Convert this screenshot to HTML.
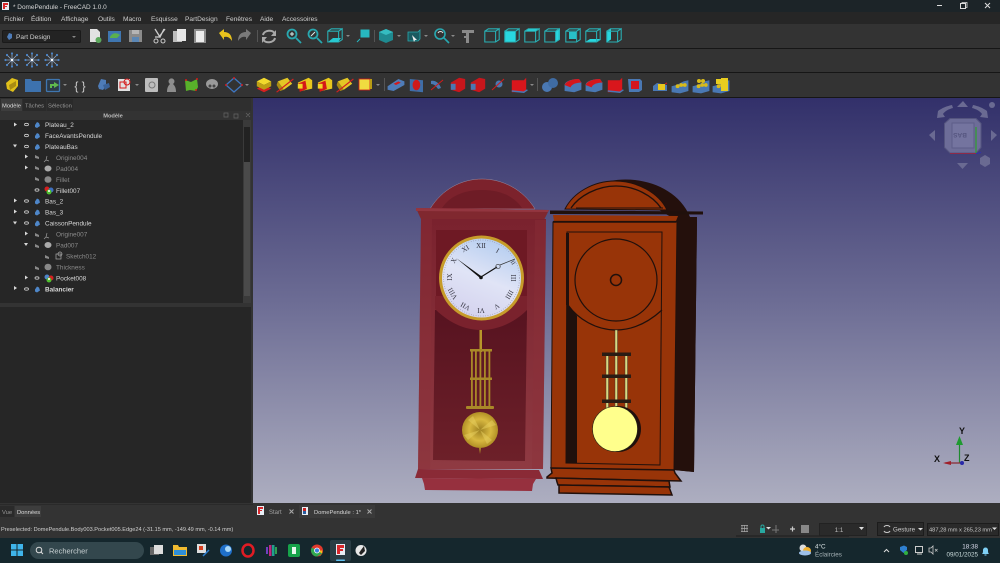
<!DOCTYPE html>
<html lang="fr"><head><meta charset="utf-8"><title>DomePendule - FreeCAD</title>
<style>
html,body{margin:0;padding:0;width:1000px;height:563px;overflow:hidden;background:#2f2f2f}
svg{display:block;font-family:"Liberation Sans",sans-serif}
.m{font-size:6.6px;fill:#cfcfcf}
.t{font-size:6.4px;fill:#d8d8d8}
.g{font-size:6.4px;fill:#8a8a8a}
.n{font-family:"Liberation Serif",serif;font-size:7px;fill:#33333f;text-anchor:middle}
</style></head><body>
<svg width="1000" height="563" viewBox="0 0 1000 563" xmlns="http://www.w3.org/2000/svg">
<defs>
<linearGradient id="bg" x1="0" y1="0" x2="0" y2="1"><stop offset="0" stop-color="#32306a"/><stop offset=".5" stop-color="#6c6c94"/><stop offset="1" stop-color="#adaec0"/></linearGradient>
<linearGradient id="face" x1="0.7" y1="0" x2="0.3" y2="1"><stop offset="0" stop-color="#b4cdf0"/><stop offset=".5" stop-color="#e0e4f6"/><stop offset="1" stop-color="#d4d2ee"/></linearGradient>
<linearGradient id="body" x1="0" y1="0" x2="0" y2="1"><stop offset="0" stop-color="#7a222e"/><stop offset="1" stop-color="#8f3a42"/></linearGradient>
<linearGradient id="pan" x1="0" y1="0" x2="0" y2="1"><stop offset="0" stop-color="#571320"/><stop offset="1" stop-color="#6d2029"/></linearGradient>
<radialGradient id="bob"><stop offset="0" stop-color="#9c7f20"/><stop offset=".6" stop-color="#d8b840"/><stop offset="1" stop-color="#b18f25"/></radialGradient>
<g id="tc" transform="scale(1.2)"><path d="M-6-4h9l3-2v9l-3 2h-9zM-6-4l3-2h9M3-4v9" fill="none" stroke="#29b0b5" stroke-width=".9"/></g>
<g id="sn" fill="none" stroke="#8fa8c8" stroke-width=".8"><path d="M-5-5L5 5M-5 5L5-5M-6 0H6M0-6V6"/><g fill="#4d86c8" stroke="none"><circle cx="-6.500" cy="0" r="1.100"/><circle cx="6.500" cy="0" r="1.100"/><circle cx="0" cy="-6.500" r="1.100"/><circle cx="0" cy="6.500" r="1.100"/><circle cx="-5" cy="-5" r="1.100"/><circle cx="5" cy="5" r="1.100"/><circle cx="-5" cy="5" r="1.100"/><circle cx="5" cy="-5" r="1.100"/></g><circle r="1.200" fill="#fff" stroke="none"/></g>
<g id="yb" transform="scale(1.2)"><path d="M-6 3l6 3 6-3-6-3z" fill="#d62020"/><path d="M-6-3l6-3 6 3-6 3z" fill="#f2d92c"/><path d="M-6-3l6 3v4l-6-3zM6-3l-6 3v4l6-3z" fill="#bd9f14"/></g>
<g id="yw" transform="scale(1.2)"><path d="M-6-3l8-3 4 5-7 5z" fill="#e3c725"/><path d="M-6-3l5 7-3 1-3-5z" fill="#a98c13"/><path d="M-7 6L7-5" stroke="#d02020"/></g>
<g id="ry" transform="scale(1.2)"><path d="M-6-2l9-4 3 2v7l-9 2z" fill="#e8c71d"/><path d="M-5-1l5-2 1 6-5 2z" fill="#d51818" stroke="#d51818"/><path d="M-6-1h4v4h-4z" fill="#f0d428"/></g>
<g id="bb" transform="scale(1.2)"><path d="M-7 1l9-6 5 2v3l-9 5-5-1z" fill="#4e7cb8"/><path d="M-2-1l4-2 2 1-4 2z" fill="#d41a1a"/></g>
<g id="br" transform="scale(1.2)"><path d="M-6-5l11 1v10l-11-1z" fill="#3f6ea8"/><ellipse cx="-.5" cy="0" rx="3.200" ry="4.400" fill="#cf1a1a"/></g>
<g id="rs" transform="scale(1.2)"><path d="M-6 4V-2l7-4 5 1v8l-5 3z" fill="#c8161c"/><path d="M-6-1h4v5h-4z" fill="#4a78b3"/></g>
<g id="rb" transform="scale(1.2)"><path d="M-6-4h10l2-2v10l-2 2h-10z" fill="#d9161c"/><path d="M-6 5l10 1 3-2" fill="none" stroke="#4a78b3" stroke-width="1.200"/></g>
<g id="rc" transform="scale(1.2)"><path d="M-7 5V0c0-3 6-5 12-5l2 3v6l-6 2z" fill="#4a78b3"/><path d="M-7 0c1-3 6-5 12-5l2 3c-4 0-8 1-9 4z" fill="#d4161c"/></g>
<g id="yg" transform="scale(1.2)"><path d="M-7 6V1l4-1 6-3 4-1v9l-7 2z" fill="#4a78b3"/><circle cx="-2" cy="1" r="1.600" fill="#d9bb1a"/><circle cx="1" cy="0" r="1.600" fill="#d9bb1a"/><circle cx="4" cy="0" r="1.600" fill="#d9bb1a"/></g>
<path id="dd" d="M0 0h4l-2 2z" fill="#8a8a8a"/>
</defs>

<!-- chrome -->
<rect width="1000" height="563" fill="#2f2f2f"/>
<rect width="1000" height="12" fill="#1c2428"/>
<rect y="12" width="1000" height="12" fill="#262626"/>
<rect y="24" width="1000" height="74" fill="#333"/>
<rect y="48" width="1000" height="1" fill="#161616"/>
<rect y="72" width="1000" height="1" fill="#161616"/>
<rect y="97" width="1000" height="1" fill="#161616"/>

<!-- title -->
<rect x="2" y="2" width="7" height="8" fill="#e8eef5"/><path d="M3 3h5v2H5v1h2v1H5v2H3z" fill="#d8282c"/>
<text x="13" y="9" style="font-size:6.450px" fill="#d6d6d6">* DomePendule - FreeCAD 1.0.0</text>
<path d="M937 5.500h5" stroke="#ddd"/><rect x="960.500" y="3.500" width="5" height="5" fill="none" stroke="#ddd"/><path d="M962 3.500v-1h5v5h-1" fill="none" stroke="#ddd" stroke-width=".8"/><path d="M985 3l5 5M990 3l-5 5" stroke="#ddd"/>

<!-- menu -->
<g class="m"><text x="4" y="21" class="m">Fichier</text><text x="31" y="21" class="m">Édition</text><text x="61" y="21" class="m">Affichage</text><text x="98" y="21" class="m">Outils</text><text x="123" y="21" class="m">Macro</text><text x="151" y="21" class="m">Esquisse</text><text x="185" y="21" class="m">PartDesign</text><text x="226" y="21" class="m">Fenêtres</text><text x="260" y="21" class="m">Aide</text><text x="282" y="21" class="m">Accessoires</text></g>

<!-- toolbar 1 -->
<rect x="2.500" y="30.500" width="78" height="12" rx="1" fill="#232323" stroke="#1a1a1a"/>
<path d="M7 37l2-4 3 1v4l-3 2z" fill="#4e7cb8"/><text x="16" y="39" class="m">Part Design</text><path d="M72 36h4l-2 2z" fill="#888"/>
<path d="M90 29h7l3 3v10H90z" fill="#e2e2e2"/><circle cx="98.500" cy="40" r="3" fill="#5ca85c"/>
<path d="M108 31h13v11h-13z" fill="#3f76b0"/><path d="M110 37c2-4 6-5 10-2l-3 3h-7z" fill="#5bb04d"/>
<path d="M129 30h13v12h-13z" fill="#8b8b8b"/><rect x="132" y="37" width="7" height="5" fill="#5b87b5"/><rect x="132" y="30" width="7" height="4" fill="#b5b5b5"/>
<path d="M155 29l5 8 4-8M165 29l-6 8-4 0" fill="none" stroke="#ccc" stroke-width="1.300"/><circle cx="156" cy="41" r="2" fill="none" stroke="#ccc"/><circle cx="163" cy="41" r="2" fill="none" stroke="#ccc"/>
<rect x="173" y="31" width="9" height="11" fill="#bdbdbd"/><rect x="177" y="29" width="9" height="12" fill="#e6e6e6"/>
<rect x="194" y="29" width="12" height="14" fill="#8d8d8d"/><rect x="196" y="31" width="8" height="11" fill="#ececec"/>
<path d="M219 33l5-4v3c5 0 8 3 8 9-2-3-4-5-8-4v3z" fill="#e8c21c"/>
<path d="M251 33l-5-4v3c-5 0-8 3-8 9 2-3 4-5 8-4v3z" fill="#7a7a7a"/>
<rect x="257" y="30" width="1" height="12" fill="#555"/>
<path d="M263 35c1-5 10-6 12-1M275 38c-1 5-10 6-12 1" fill="none" stroke="#a8a8a8" stroke-width="2"/><path d="M276 30v6h-5zM262 43v-6h5z" fill="#a8a8a8"/>
<g fill="none" stroke="#28a8b0" stroke-width="1.800"><circle cx="292" cy="34" r="4.500"/><path d="M296 38l5 5"/><circle cx="313" cy="34" r="4.500"/><path d="M317 38l5 5"/></g>
<path d="M290 34h4M292 32v4" stroke="#d8f0f0"/><path d="M311 36l4-4" stroke="#d8f0f0"/>
<g transform="translate(335 36)"><use href="#tc"/><path d="M-7 6l5-4h8l-3 4z" fill="#28c8d0"/></g><use href="#dd" x="346" y="35"/>
<path d="M361 30h8v7h-8zM357 42l3-3" fill="#27b8c0" stroke="#27b8c0"/>
<rect x="374" y="30" width="1" height="12" fill="#555"/>
<path d="M379 32l7-3 7 3v8l-7 3-7-3z" fill="#1f8a90"/><path d="M379 32l7 3 7-3-7-3z" fill="#35bcc0"/><use href="#dd" x="397" y="35"/>
<g transform="translate(414 36)"><path d="M-6-4h10l2-2v9l-2 2h-10z" fill="#1a5a60" stroke="#29a8ad" stroke-width=".8"/><path d="M-2-1l5 5-2 0 -1 2z" fill="#eee"/></g><use href="#dd" x="424" y="35"/>
<circle cx="440" cy="34" r="5" fill="none" stroke="#28a8b0" stroke-width="1.600"/><path d="M444 38l5 5" stroke="#28a8b0" stroke-width="1.600"/><path d="M438 33c1-2 4-2 5 0" stroke="#ddd" fill="none"/><use href="#dd" x="451" y="35"/>
<path d="M462 30h12v3h-5v10h-3v-5h-2v-2h2v-3h-4z" fill="#8a8a8a"/>
<use href="#tc" x="492" y="36"/>
<rect x="485" y="0" width="0" height="0"/>
<rect x="505" y="31" width="10" height="11" fill="#28d8e0"/><use href="#tc" x="512" y="36"/>
<path d="M525 31l4-2.500h11l-4 2.500z" fill="#28d8e0"/><use href="#tc" x="532" y="36"/>
<path d="M556 31l4-2.500v11l-4 2.500z" fill="#28d8e0"/><use href="#tc" x="552" y="36"/>
<rect x="569" y="32" width="7" height="7" fill="#28c0c8"/><use href="#tc" x="573" y="36"/>
<path d="M586 41.500l4-2.500h11l-4 2.500z" fill="#28d8e0"/><use href="#tc" x="593" y="36"/>
<path d="M607 31l4-2.500v11l-4 2.500z" fill="#28d8e0"/><use href="#tc" x="614" y="36"/>

<!-- toolbar 2 -->
<use href="#sn" x="12" y="60"/><use href="#sn" x="32" y="60"/><use href="#sn" x="52" y="60"/>

<!-- toolbar 3 -->
<path d="M6 83l6-5 6 2v6l-5 6-6-3z" fill="#e0c01a"/><path d="M9 85l7-4v5l-6 4z" fill="#a98c13"/>
<path d="M25 79h6l1 2h9v11H25z" fill="#3d72ae"/>
<rect x="46.500" y="79.500" width="13" height="12" rx="1" fill="#2c3a48" stroke="#3f76b0" stroke-width="1.300"/><path d="M50 88v-4h4v-2l5 3-5 3v-2h-2v2z" fill="#5fb84d"/><use href="#dd" x="63" y="84"/>
<text x="80" y="90" text-anchor="middle" style="font-size:12px" fill="#ccc">{ }</text>
<path d="M98 86l3-7 5 1v6l-3 4-4-1z" fill="#4e7cb8"/><path d="M103 85l6-2 1 4-5 3z" fill="#3a6298"/>
<rect x="118" y="79" width="12" height="12" fill="#e2e2e2"/><rect x="120" y="82" width="6" height="6" fill="none" stroke="#d41a1a"/><circle cx="127" cy="82" r="3" fill="none" stroke="#d41a1a"/><use href="#dd" x="135" y="84"/>
<rect x="145" y="78" width="13" height="14" rx="1" fill="#bdbdbd"/><circle cx="152" cy="85" r="3" fill="none" stroke="#777"/>
<path d="M167 92c0-4 1-6 3-8a3 3 0 1 1 3 0c2 2 3 4 3 8z" fill="#8d8d8d"/>
<path d="M185 80l6 2 6-3 1 8-2 4-6-1-4 1z" fill="#58b02a"/><circle cx="186" cy="80" r="1" fill="#d41a1a"/><circle cx="197" cy="79" r="1" fill="#d41a1a"/><circle cx="196" cy="90" r="1" fill="#d41a1a"/>
<ellipse cx="212" cy="84" rx="6" ry="5" fill="#9a9a9a"/><circle cx="210" cy="86" r="1.500" fill="#444"/><circle cx="214" cy="86" r="1.500" fill="#444"/>
<path d="M226 85l8-7 8 7-8 7z" fill="none" stroke="#3f76c0" stroke-width="1.300"/><g fill="#d41a1a"><circle cx="234" cy="78" r="1"/><circle cx="242" cy="85" r="1"/><circle cx="226" cy="85" r="1"/></g><use href="#dd" x="245" y="84"/>
<use href="#yb" x="264" y="85"/><use href="#yw" x="285" y="85"/><use href="#ry" x="305" y="85"/><use href="#ry" x="325" y="85"/><use href="#yw" x="345" y="85"/>
<rect x="359" y="79" width="11" height="11" fill="#f0dc40" stroke="#d41a1a" stroke-width=".8"/><rect x="370" y="79" width="2" height="10" fill="#b89c14"/><use href="#dd" x="376" y="84"/>
<rect x="384" y="78" width="1" height="13" fill="#555"/>
<use href="#bb" x="396" y="85"/><use href="#br" x="417" y="85"/><path d="M431 81c3-1 8 1 10 7l-3 1c-2-3-4-5-7-5z" fill="#4a78b3"/><path d="M431 90l12-10" stroke="#d41a1a"/>
<use href="#rs" x="458" y="85"/><use href="#rs" x="478" y="85"/><circle cx="499" cy="84" r="3.500" fill="#4a78b3"/><path d="M492 90l12-11" stroke="#d41a1a"/><use href="#rb" x="519" y="85"/><use href="#dd" x="530" y="84"/>
<rect x="537" y="78" width="1" height="13" fill="#555"/>
<circle cx="547" cy="87" r="5" fill="#4a78b3"/><circle cx="553" cy="83" r="5" fill="#3f6ca4"/>
<use href="#rc" x="573" y="85"/><use href="#rc" x="594" y="85"/><use href="#rb" x="615" y="85"/><g transform="translate(635 85)"><path d="M-7-6h12l2 2v9l-3 2h-10z" fill="#4a78b3"/><path d="M-4-4h8v8h-8z" fill="#d4161c"/></g>
<g transform="translate(660 85)"><path d="M-7 6V1l4-3 10 2v6z" fill="#4a78b3"/><rect x="-2" y="-1" width="7" height="6" fill="#e8c71d"/><path d="M5-1l2-1" stroke="#d41a1a"/></g>
<use href="#yg" x="680" y="85"/><use href="#yg" x="701" y="85"/><circle cx="699" cy="81" r="2" fill="#d9bb1a"/><circle cx="703" cy="81" r="2" fill="#d9bb1a"/>
<use href="#yg" x="721" y="85"/><rect x="716" y="79" width="6" height="5" fill="#e8cd20"/><rect x="721" y="78" width="7" height="8" fill="#e8cd20"/><rect x="721" y="85" width="7" height="6" fill="#e8cd20"/>

<!-- left panel -->
<rect y="98" width="253" height="405" fill="#2f2f2f"/>
<rect x="1" y="99" width="21" height="12" fill="#3d3d3d"/><rect x="23" y="99" width="23" height="12" fill="#2a2a2a"/><rect x="47" y="99" width="26" height="12" fill="#2a2a2a"/>
<text x="2" y="107.500" style="font-size:5.800px" fill="#ddd">Modèle</text><text x="25" y="107.500" style="font-size:5.800px" fill="#999">Tâches</text><text x="48" y="107.500" style="font-size:5.800px" fill="#999">Sélection</text>
<rect y="111" width="253" height="9" fill="#333"/>
<text x="113" y="117.500" text-anchor="middle" style="font-size:5.700px;font-weight:bold" fill="#bbb">Modèle</text>
<path d="M224 113h4v4h-4zM234 114h4v4h-4zM246 113l4 4M250 113l-4 4" fill="none" stroke="#666" stroke-width=".7"/>
<rect y="120" width="243" height="183" fill="#262626"/>
<rect x="243" y="120" width="8" height="183" fill="#3a3a3a"/><rect x="244" y="127" width="6" height="35" fill="#222"/><rect x="244" y="162" width="6" height="134" fill="#4a4a4a"/>
<rect y="303" width="253" height="4" fill="#333"/>
<rect y="307" width="253" height="197" fill="#262626"/>
<rect x="251" y="98" width="2" height="405" fill="#333"/>

<!-- tree rows -->
<g fill="#d8d8d8"><path d="M14 122.500l3 2-3 2zM14 198.500l3 2-3 2zM14 209.500l3 2-3 2zM14 286l3 2-3 2zM25 154.500l3 2-3 2zM25 165.500l3 2-3 2zM25 231.500l3 2-3 2zM25 275.500l3 2-3 2z"/><path d="M13 144.500l4 0-2 3zM13 221.500l4 0-2 3zM24 243l4 0-2 3z"/></g>
<g fill="none" stroke="#cfcfcf" stroke-width=".8"><ellipse cx="26.500" cy="124.500" rx="2" ry="1.200"/><ellipse cx="26.500" cy="135.500" rx="2" ry="1.200"/><ellipse cx="26.500" cy="146.500" rx="2" ry="1.200"/><ellipse cx="26.500" cy="201" rx="2" ry="1.200"/><ellipse cx="26.500" cy="212" rx="2" ry="1.200"/><ellipse cx="26.500" cy="223" rx="2" ry="1.200"/><ellipse cx="26.500" cy="289" rx="2" ry="1.200"/><ellipse cx="37" cy="190" rx="2" ry="1.200"/><ellipse cx="37" cy="278" rx="2" ry="1.200"/></g>
<g fill="#8a8a8a"><path d="M35 155l4 2 0 2-4-1zM35 166l4 2 0 2-4-1zM35 177l4 2 0 2-4-1zM35 233l4 2 0 2-4-1zM35 244l4 2 0 2-4-1zM35 266l4 2 0 2-4-1zM45 255l4 2 0 2-4-1z"/></g>
<g fill="#4e86c8"><path d="M35 125l2-3 2 1 1 3-3 2-2-1z"/><path d="M35 136l2-3 2 1 1 3-3 2-2-1z"/><path d="M35 147l2-3 2 1 1 3-3 2-2-1z"/><path d="M35 201.500l2-3 2 1 1 3-3 2-2-1z"/><path d="M35 212.500l2-3 2 1 1 3-3 2-2-1z"/><path d="M35 223.500l2-3 2 1 1 3-3 2-2-1z"/><path d="M35 289.500l2-3 2 1 1 3-3 2-2-1z"/></g>
<path d="M47 156l-1 4M46 160l-2 2M46 160l3 1M47 233l-1 4M46 237l-2 2M46 237l3 1" stroke="#999" stroke-width=".7"/>
<ellipse cx="48" cy="168.500" rx="3.500" ry="3" fill="#aaa"/><ellipse cx="48" cy="179.500" rx="3.500" ry="3.300" fill="#888"/><ellipse cx="48" cy="245" rx="3.500" ry="3" fill="#aaa"/><ellipse cx="48" cy="267" rx="3.500" ry="3.300" fill="#888"/>
<rect x="56" y="254" width="5" height="5" fill="none" stroke="#aaa" stroke-width=".7"/><circle cx="60" cy="254" r="2" fill="none" stroke="#aaa" stroke-width=".7"/>
<circle cx="47" cy="189" r="2.500" fill="#d42020"/><circle cx="51" cy="190" r="2.500" fill="#3f6fc0"/><circle cx="49" cy="192" r="2.500" fill="#50c030"/><circle cx="49" cy="191" r="1" fill="#fff"/>
<circle cx="47" cy="277" r="2.500" fill="#4e86c8"/><circle cx="51" cy="278" r="2.500" fill="#d42020"/><circle cx="49" cy="280" r="2.500" fill="#50c030"/><circle cx="49" cy="279" r="1" fill="#fff"/>
<g class="t"><text x="45" y="127" class="t">Plateau_2</text><text x="45" y="138" class="t">FaceAvantsPendule</text><text x="45" y="149" class="t">PlateauBas</text><text x="56" y="160" class="g">Origine004</text><text x="56" y="171" class="g">Pad004</text><text x="56" y="182" class="g">Fillet</text><text x="56" y="193" class="t">Fillet007</text><text x="45" y="203.500" class="t">Bas_2</text><text x="45" y="214.500" class="t">Bas_3</text><text x="45" y="225.500" class="t">CaissonPendule</text><text x="56" y="236.500" class="g">Origine007</text><text x="56" y="247.500" class="g">Pad007</text><text x="66" y="258.500" class="g">Sketch012</text><text x="56" y="269.500" class="g">Thickness</text><text x="56" y="280.500" class="t">Pocket008</text><text x="45" y="291.500" class="t" style="font-weight:bold" fill="#fff">Balancier</text></g>

<!-- viewport -->
<rect x="253" y="98" width="747" height="405" fill="url(#bg)"/>

<!-- nav cube -->
<g fill="#6a6a92">
<path d="M937 118l1-7c4-3 9-5 14-6l1 3c-4 1-8 3-10 6l2 3zM988 118l-1-7c-4-3-9-5-14-6l-1 3c4 1 8 3 10 6l-2 3zM963 101l5 6h-11zM929 135l6-5v11zM997 135l-6-5v11zM957 163h11l-5.500 6z"/>
<circle cx="992" cy="105" r="3"/>
<path d="M980 158l5-3 5 3v6l-5 3-5-3z"/>
</g>
<path d="M950 118.500h26l5 5v24l-5 5.500h-26l-5.500-5.500v-24z" fill="#6d6d98" stroke="#55557f"/><path d="M952 123h22v25h-22z" fill="#74749f" stroke="#5d5d88"/>
<text x="960" y="139" text-anchor="middle" transform="rotate(180 960 136)" style="font-size:6.500px;font-weight:bold" fill="#55557f">BAS</text>
<path d="M976 127v26" stroke="#2ea02e" stroke-width="1.200"/><path d="M950 153.500h26" stroke="#8e2a48"/><path d="M976 153.500l5-1" stroke="#3030b0"/>

<!-- LEFT CLOCK -->
<path d="M430 209c12-20 32-30 52-30s41 10 53 30z" fill="#7c222c" stroke="#9a8a9e" stroke-width=".5"/>
<path d="M442 208c8-12 22-18 40-18s32 6 40 18z" fill="#6e1c26"/>
<path d="M421 219l-1-2-4-9 133 2-4 8-1 2z" fill="#80282f"/>
<path d="M416 208l133 2-1 2-132-1z" fill="#933640"/>
<path d="M421 219h125l-3 250-125-0z" fill="url(#body)"/>
<path d="M421 219h11l-2 250h-12zM535 220h11l-3 249h-11z" fill="#8b3038" opacity=".35"/>
<rect x="436" y="230" width="91" height="90" fill="#6e1924"/>
<path d="M435 310h92l-2 151-92-1z" fill="url(#pan)"/>
<path d="M435 309c8 8 24 21 46 21s38-12 46-20v-14h-92z" fill="#7a222d"/>
<circle cx="481.500" cy="278" r="42.500" fill="#c79c2a"/>
<circle cx="481.500" cy="278" r="39.500" fill="url(#face)"/>
<circle cx="481.500" cy="278" r="38" fill="none" stroke="#9a9ab0" stroke-width="1" stroke-dasharray=".6 1.800"/>
<g>
<text class="n" x="481" y="248" >XII</text>
<text class="n" transform="rotate(30 498 250)" x="498" y="253">I</text>
<text class="n" transform="rotate(60 514 262)" x="514" y="265" style="font-size:6px">II</text>
<text class="n" transform="rotate(90 514 278)" x="514" y="281">III</text>
<text class="n" transform="rotate(120 510 295)" x="510" y="298">IIII</text>
<text class="n" transform="rotate(150 497 307)" x="497" y="310">V</text>
<text class="n" transform="rotate(180 481 311)" x="481" y="314">VI</text>
<text class="n" transform="rotate(210 465 307)" x="465" y="310">VII</text>
<text class="n" transform="rotate(240 452 294)" x="452" y="297">VIII</text>
<text class="n" transform="rotate(270 449 277)" x="449" y="280">IX</text>
<text class="n" transform="rotate(300 453 260)" x="453" y="263">X</text>
<text class="n" transform="rotate(330 465 248)" x="465" y="251">XI</text>
</g>
<path d="M456 258l25 18 1.500 2-3-.500z" fill="#111"/>
<path d="M481 277l16-10" stroke="#111" stroke-width="1.200"/><circle cx="498" cy="266.500" r="2.200" fill="none" stroke="#333" stroke-width=".7"/><path d="M500 265l15-6" stroke="#333" stroke-width=".7"/>
<circle cx="481" cy="277.500" r="1.800" fill="#111"/>
<!-- left pendulum -->
<rect x="479.500" y="330" width="2.500" height="22" fill="#b8962a"/>
<g fill="#a98828">
<rect x="470" y="349" width="22" height="2.500"/><rect x="470" y="377.500" width="22" height="2.500"/><rect x="466" y="406" width="28" height="3" rx="1"/>
<rect x="471" y="350" width="1.800" height="58"/><rect x="475" y="350" width="1.800" height="58"/><rect x="479.500" y="350" width="1.800" height="58"/><rect x="484" y="350" width="1.800" height="58"/><rect x="488.500" y="350" width="1.800" height="58"/>
</g>
<circle cx="480" cy="430" r="18" fill="url(#bob)"/>
<path d="M480 430l-12-10 5-4zM480 430l12 10-5 4zM480 430l-12 10-4-5zM480 430l12-10 4 5z" fill="#e8d060" opacity=".5"/>
<path d="M479 448h2l-1 6z" fill="#a98828"/>
<!-- left base -->
<path d="M418 469l121 1 4 9-128-1z" fill="#8a2a36"/>
<path d="M422 478l114 1-3 5-1 7-107-1-1-6z" fill="#96303e"/>

<!-- RIGHT CLOCK -->
<path d="M610 181c30-6 68 6 80 36l7 3-3 252-20-2 2-250z" fill="#24100c"/>
<path d="M677 217h20l-3 255-20-2z" fill="#24100c"/>
<path d="M565 209c8-16 28-28 50-28s44 12 52 29z" fill="#983408" stroke="#20100c" stroke-width="1"/>
<path d="M571 208c8-12 26-22 45-22s37 10 45 22" fill="none" stroke="#20100c" stroke-width="1.300"/>
<path d="M576 208h87" stroke="#20100c"/>
<path d="M553 222h124l-3 248-123-2z" fill="#983408" stroke="#20100c"/>
<path d="M550 210.500l153 1v3l-153-.5z" fill="#20100c"/>
<path d="M553 215l125 1-2 5h-122z" fill="#983408"/><path d="M553 221.800h123" stroke="#20100c" stroke-width="1.800"/>
<path d="M567 232h95l-2 233-94-2z" fill="#983408" stroke="#20100c"/>
<path d="M566 233h3v72h-3z" fill="#20100c"/>
<path d="M567 303l10 13v147h-11z" fill="#20100c"/>
<path d="M568 305c10 14 28 25 48 25s35-10 46-20" fill="none" stroke="#20100c" stroke-width="1.200"/>
<circle cx="616" cy="280" r="41" fill="none" stroke="#20100c" stroke-width="1.200"/>
<circle cx="616" cy="280" r="5.500" fill="none" stroke="#20100c" stroke-width="1.500"/>
<!-- right pendulum -->
<rect x="615" y="330" width="2.500" height="78" fill="#d8d880" stroke="#333" stroke-width=".4"/>
<rect x="606" y="354" width="2.500" height="54" fill="#d8d880" stroke="#333" stroke-width=".4"/><rect x="625" y="354" width="2.500" height="54" fill="#d8d880" stroke="#333" stroke-width=".4"/>
<rect x="602" y="352.500" width="29" height="3.500" fill="#2a1c14"/><rect x="602" y="374.500" width="29" height="3.500" fill="#2a1c14"/><rect x="602" y="399.500" width="29" height="3.500" fill="#2a1c14"/>
<circle cx="618" cy="429" r="23" fill="#20100c"/>
<circle cx="615" cy="429" r="22.500" fill="#ffff8c" stroke="#2a2a18" stroke-width=".6"/>
<!-- right base -->
<path d="M551 468l123 2 1 3 6 8-134-3v-1l5-4z" fill="#983408" stroke="#20100c" stroke-width="1.500"/>
<path d="M556 478l113 3 1 6-112-2-1-3z" fill="#983408" stroke="#20100c" stroke-width="1.500"/>
<path d="M559 485l110 2 3 8-113-2z" fill="#983408" stroke="#20100c" stroke-width="1.500"/>

<!-- axis -->
<path d="M959.500 463v-22" stroke="#1f8a2f" stroke-width="1.200"/><path d="M956 445l3.500-9 3.500 9z" fill="#1f9a30"/>
<path d="M962 463h-17" stroke="#8a2a34" stroke-width="1.200"/><path d="M951 461l-8 2 8 2z" fill="#a01f2a"/>
<circle cx="962" cy="463" r="2" fill="#2828a8"/>
<g style="font-size:9px;font-weight:bold" fill="#111"><text x="959" y="434">Y</text><text x="934" y="462">X</text><text x="964" y="461">Z</text></g>

<!-- tab bar / status -->
<rect y="503" width="1000" height="35" fill="#333"/>
<rect x="0" y="504" width="253" height="1" fill="#2a2a2a"/>
<rect x="0" y="506" width="14" height="11" fill="#2a2a2a"/><rect x="15" y="506" width="26" height="11" fill="#3d3d3d"/>
<text x="2" y="514" style="font-size:5.800px" fill="#999">Vue</text><text x="17" y="514" style="font-size:5.800px" fill="#ddd">Données</text>
<rect x="299" y="505" width="76" height="13" fill="#3a3a3a"/>
<rect x="257" y="506" width="7" height="9" fill="#e8eef5"/><path d="M258 507h5v2h-3v1h2v1h-2v3h-2z" fill="#d8282c"/>
<text x="269" y="514" style="font-size:6px" fill="#a0a0a0">Start</text><path d="M289.500 509.500l4 4M293.500 509.500l-4 4" stroke="#aaa"/>
<rect x="302" y="507" width="6" height="8" fill="#e8eef5"/><rect x="303" y="508" width="3" height="3" fill="#c82020"/><rect x="303" y="511" width="3" height="3" fill="#2a5fa0"/>
<text x="314" y="514" style="font-size:5.800px" fill="#d6d6d6">DomePendule : 1*</text><path d="M367.500 509.500l4 4M371.500 509.500l-4 4" stroke="#aaa"/>
<text x="1" y="531" style="font-size:5.600px" fill="#cfcfcf">Preselected: DomePendule.Body003.Pocket005.Edge24 (-31.15 mm, -149.49 mm, -0.14 mm)</text>
<path d="M741 525.500h7M741 528.500h7M741 531.500h7M742 525v7M744.500 525v7M747 525v7" stroke="#aaa" stroke-width=".7"/>
<rect x="760" y="528" width="5" height="5" fill="#28a8a0"/><path d="M761 528v-1.500a1.500 1.500 0 0 1 3 0V528" fill="none" stroke="#28a8a0"/><path d="M766 527h5l-2.500 2.500z" fill="#ddd"/>
<path d="M776 525v8M772 530h7" stroke="#777"/><path d="M790 529h5M792.500 526.500v5" stroke="#ccc" stroke-width="1.200"/><rect x="801" y="525" width="8" height="8" fill="#888"/>
<path d="M736 536h113" stroke="#1c1c1c"/>
<rect x="819.500" y="523.500" width="47" height="12" fill="#2a2a2a" stroke="#222"/><text x="839" y="532" text-anchor="middle" style="font-size:6.200px" fill="#bbb">1:1</text><path d="M859 527h5l-2.500 3z" fill="#ddd"/>
<rect x="877.500" y="522.500" width="46" height="13" fill="#2a2a2a" stroke="#1c1c1c"/><path d="M884 527c1-2 5-2 6 0M890 531c-1 2-5 2-6 0" fill="none" stroke="#ccc"/><text x="893" y="531.500" style="font-size:6.200px" fill="#ccc">Gesture</text><path d="M918 528h5l-2.500 2.500z" fill="#ddd"/>
<rect x="927.500" y="523.500" width="71" height="12" fill="#2a2a2a" stroke="#1c1c1c"/><text x="929" y="531.500" style="font-size:5.700px" fill="#c8c8c8">487,28 mm x 265,23 mm</text><path d="M992 527.500h5l-2.500 2.500z" fill="#ddd"/>

<!-- taskbar -->
<rect y="538" width="1000" height="25" fill="#15272d"/>
<g fill="#3fb4ea"><rect x="11" y="544" width="5.500" height="5.500"/><rect x="17.500" y="544" width="5.500" height="5.500"/><rect x="11" y="550.500" width="5.500" height="5.500"/><rect x="17.500" y="550.500" width="5.500" height="5.500"/></g>
<rect x="30" y="542" width="114" height="17" rx="8.500" fill="#33474d"/>
<circle cx="39" cy="550" r="2.800" fill="none" stroke="#ddd"/><path d="M41 552l2 2" stroke="#ddd"/>
<text x="49" y="553.500" style="font-size:7.500px" fill="#c8d0d2">Rechercher</text>
<rect x="150" y="547" width="9" height="8" fill="#666"/><rect x="154" y="545" width="9" height="9" fill="#ddd"/>
<path d="M173 545h5l1 2h8v9h-14z" fill="#f0bb30"/><rect x="174" y="550" width="12" height="5" fill="#2f8fd8"/>
<rect x="197" y="544" width="9" height="9" fill="#ddd"/><rect x="199" y="546" width="4" height="4" fill="#d84020"/><path d="M203 556l6-6" stroke="#2f7fd0" stroke-width="1.500"/>
<circle cx="226" cy="550.500" r="6" fill="#1f6fc8"/><circle cx="228" cy="549" r="3" fill="#a8d8f8"/>
<ellipse cx="248" cy="550.500" rx="5.500" ry="6" fill="none" stroke="#e01c24" stroke-width="2.500"/>
<g fill="#8040c0"><rect x="266" y="547" width="2" height="7" fill="#7040c0"/><rect x="269" y="545" width="2.500" height="11" fill="#c02880"/><rect x="272" y="545" width="2.500" height="11" fill="#20a090"/><rect x="275" y="547" width="2" height="7" fill="#30a050"/></g>
<rect x="288" y="544" width="12" height="13" rx="2" fill="#16a34a"/><rect x="292" y="547" width="4" height="7" fill="#e8f8ee"/>
<circle cx="317" cy="550.500" r="6" fill="#e0392c"/><path d="M317 550.500l5.200 3-5.200 3a6 6 0 0 1-5.200-9z" fill="#2fa84f"/><path d="M317 550.500l5.200 3-3 3a6 6 0 0 0 3-6z" fill="#f7c21c"/><circle cx="317" cy="550.500" r="2.500" fill="#3b7ee0" stroke="#fff" stroke-width=".8"/>
<rect x="330" y="540" width="21" height="21" rx="2" fill="#2a3d44"/>
<rect x="336" y="544" width="9" height="11" fill="#e8eef5"/><path d="M337 545h7v3h-4v1h3v2h-3v3h-3z" fill="#d8282c"/><rect x="336" y="559.500" width="9" height="1.500" rx=".7" fill="#60c0f0"/>
<circle cx="361" cy="550.500" r="5.500" fill="#e8e8e8"/><path d="M361 550l3-4 1 5-4 4-2-2z" fill="#222"/>
<circle cx="803" cy="548" r="3.500" fill="#ddd"/><circle cx="807" cy="551" r="4" fill="#f0b030"/><ellipse cx="805" cy="553" rx="6" ry="2.500" fill="#9ec0e8"/>
<text x="815" y="548.500" style="font-size:6.300px" fill="#d8e0e2">4°C</text><text x="815" y="556.500" style="font-size:6.300px" fill="#a8b4b8">Éclaircies</text>
<path d="M884 552l2.500-2.500 2.500 2.500" fill="none" stroke="#ddd"/>
<path d="M900 547l4-1.500 3 1.500v3l-3.500 3-3.500-3z" fill="#2f80d0"/><circle cx="906" cy="553" r="2" fill="#30b040"/>
<rect x="915.500" y="546.500" width="7" height="6" fill="none" stroke="#ccc"/><path d="M917 554h5" stroke="#ccc"/>
<path d="M929 548h2l2-2v8l-2-2h-2z" fill="none" stroke="#ccc" stroke-width=".8"/><path d="M935 549l2.500 2.500M937.500 549l-2.500 2.500" stroke="#ccc" stroke-width=".7"/>
<text x="978" y="548.500" text-anchor="end" style="font-size:6.300px" fill="#dde">18:38</text><text x="978" y="556.500" text-anchor="end" style="font-size:6.300px" fill="#cdd">09/01/2025</text>
<path d="M982 554c1-1 1-2 1-4a2.500 2.500 0 0 1 5 0c0 2 0 3 1 4z" fill="#7fd0f5"/><rect x="984.500" y="554.500" width="2" height="1" fill="#7fd0f5"/>
</svg>
</body></html>
